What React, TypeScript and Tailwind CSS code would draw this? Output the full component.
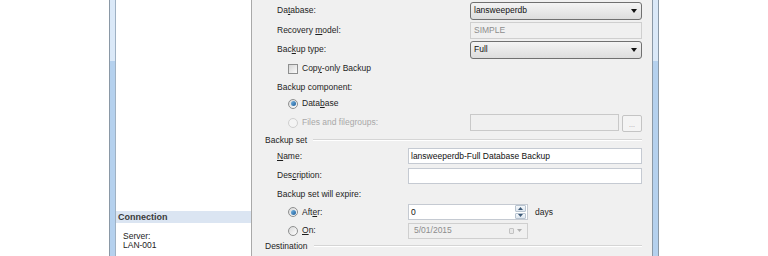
import React from 'react';

const font = { fontFamily: '"Liberation Sans", Arial, sans-serif' };

function U({ children }: { children: React.ReactNode }) {
  return <span className="underline underline-offset-[1px]">{children}</span>;
}

function Combo({ value }: { value: string }) {
  return (
    <div className="w-[172px] h-[18px] rounded-[3px] border border-[#707070] bg-gradient-to-b from-[#f4f4f4] to-[#dddddd] flex items-center pl-[3px] pr-[4px] text-[#111]">
      <span className="flex-1">{value}</span>
      <svg width="6" height="4" viewBox="0 0 6 4">
        <path d="M0 0h6L3 4z" fill="#111" />
      </svg>
    </div>
  );
}

function Radio({ checked, disabled }: { checked?: boolean; disabled?: boolean }) {
  return (
    <div
      className={
        'w-[10px] h-[10px] rounded-full border flex items-center justify-center ' +
        (disabled
          ? 'border-[#cfcfcf] bg-[#f4f4f4]'
          : 'border-[#8e8f8f] bg-gradient-to-br from-[#d8d8d8] to-[#ffffff]')
      }
    >
      {checked && <div className="w-[5px] h-[5px] rounded-full bg-gradient-to-br from-[#7ab8e4] to-[#1b5f9c]" />}
    </div>
  );
}

function GroupHeader({ title }: { title: string }) {
  return (
    <div className="h-[12px] flex items-center pl-[13px] pr-[10px] gap-[6px]">
      <span>{title}</span>
      <div className="flex-1 border-t border-[#d5d5d5] border-b border-b-white h-[2px]" />
    </div>
  );
}

export default function App() {
  return (
    <div className="w-[768px] h-[256px] bg-white flex text-[8.5px] leading-none text-[#1e1e1e] overflow-hidden" style={font}>
      <div className="w-[109px]" />
      {/* left frame */}
      <div className="w-[1px] bg-[#8a98a6]" />
      <div className="w-[5px] flex flex-col">
        <div className="h-[61px] bg-[#dbe9f8]" />
        <div className="flex-1 bg-[#b5d1ee]" />
      </div>
      <div className="w-[1px] bg-[#9fb1c3]" />

      {/* left pane */}
      <div className="w-[136px] bg-white flex flex-col border-r border-[#a9a9a9]">
        <div className="h-[211px]" />
        <div className="h-[12px] bg-[#dbe5f2] flex items-center pl-[2px] font-bold text-[#3a3a3a] text-[9px]">Connection</div>
        <div className="pl-[7px] pt-[9px] flex flex-col text-[#222] leading-[9px]">
          <span>Server:</span>
          <span>LAN-001</span>
        </div>
      </div>

      {/* right pane */}
      <div className="w-[400px] bg-[#f0f0f0] flex flex-col">
        <div className="h-[21px] flex items-center pl-[25px]">
          <span className="w-[193px]">Da<U>t</U>abase:</span>
          <Combo value="lansweeperdb" />
        </div>
        <div className="h-[19px] flex items-center pl-[25px]">
          <span className="w-[193px]">Recovery <U>m</U>odel:</span>
          <div className="w-[172px] h-[17px] border border-[#cfcfcf] bg-[#f0f0f0] flex items-center pl-[3px] text-[#8d8d8d]">SIMPLE</div>
        </div>
        <div className="h-[19px] flex items-center pl-[25px]">
          <span className="w-[193px]">Bac<U>k</U>up type:</span>
          <Combo value="Full" />
        </div>
        <div className="h-[19px] flex items-center pl-[36px] gap-[4px]">
          <div className="w-[10px] h-[10px] border border-[#8e8f8f] bg-gradient-to-br from-[#d6d6d6] to-[#fbfbfb]" />
          <span>Cop<U>y</U>-only Backup</span>
        </div>
        <div className="h-[18px] flex items-center pl-[25px]">Backup component:</div>
        <div className="h-[15px] flex items-center pl-[36px] gap-[4px]">
          <Radio checked />
          <span>Data<U>b</U>ase</span>
        </div>
        <div className="h-[23px] flex items-center pl-[36px]">
          <Radio disabled />
          <span className="w-[172px] pl-[4px] text-[#a8a8a8]">Files and filegroups:</span>
          <div className="w-[149px] h-[17px] border border-[#c9c9c9] bg-[#f0f0f0]" />
          <div className="ml-[3px] w-[20px] h-[17px] mt-[2px] rounded-[2px] border border-[#c4c4c4] bg-[#f4f4f4] flex items-end justify-center pb-[3px] text-[#a0a0a0] text-[7px]">...</div>
        </div>
        <GroupHeader title="Backup set" />
        <div className="h-[20px] flex items-center pl-[25px]">
          <span className="w-[131px]"><U>N</U>ame:</span>
          <div className="w-[234px] h-[16px] border border-[#c5cad2] bg-white flex items-center pl-[2px] text-[#111]">lansweeperdb-Full Database Backup</div>
        </div>
        <div className="h-[19px] flex items-center pl-[25px]">
          <span className="w-[131px]">Des<U>c</U>ription:</span>
          <div className="w-[234px] h-[16px] border border-[#c5cad2] bg-white" />
        </div>
        <div className="h-[18px] flex items-center pl-[25px]">Backup set will expire:</div>
        <div className="h-[18px] flex items-center pl-[36px]">
          <Radio checked />
          <span className="w-[110px] pl-[4px]">Aft<U>e</U>r:</span>
          <div className="w-[120px] h-[16px] border border-[#c5cad2] bg-white flex items-center">
            <span className="flex-1 pl-[2px] text-[#111]">0</span>
            <div className="w-[11px] h-[14px] mr-[1px] flex flex-col gap-[1px]">
              <div className="flex-1 rounded-[1px] border border-[#b8c4d0] bg-gradient-to-b from-[#f5f8fb] to-[#dde6ef] flex items-center justify-center">
                <svg width="5" height="3" viewBox="0 0 5 3"><path d="M0 3h5L2.5 0z" fill="#3d5a78" /></svg>
              </div>
              <div className="flex-1 rounded-[1px] border border-[#b8c4d0] bg-gradient-to-b from-[#f5f8fb] to-[#dde6ef] flex items-center justify-center">
                <svg width="5" height="3" viewBox="0 0 5 3"><path d="M0 0h5L2.5 3z" fill="#3d5a78" /></svg>
              </div>
            </div>
          </div>
          <span className="pl-[7px]">days</span>
        </div>
        <div className="h-[19px] flex items-center pl-[36px]">
          <Radio />
          <span className="w-[110px] pl-[4px]"><U>O</U>n:</span>
          <div className="w-[120px] h-[16px] border border-[#cfcfcf] bg-[#f0f0f0] flex items-center pl-[5px] pr-[5px] text-[#8d8d8d]">
            <span className="flex-1">5/01/2015</span>
            <div className="w-[5px] h-[6px] border border-[#c2c2c2] bg-[#e8e8e8] rounded-[1px]" />
            <svg className="ml-[3px]" width="5" height="3" viewBox="0 0 5 3"><path d="M0 0h5L2.5 3z" fill="#b0b0b0" /></svg>
          </div>
        </div>
        <GroupHeader title="Destination" />
      </div>

      {/* right frame */}
      <div className="w-[1px] bg-[#8a98a6]" />
      <div className="w-[5px] flex flex-col">
        <div className="h-[61px] bg-[#dbe9f8]" />
        <div className="flex-1 bg-[#b5d1ee]" />
      </div>
      <div className="w-[1px] bg-[#8a98a6]" />
      <div className="flex-1 bg-white" />
    </div>
  );
}
